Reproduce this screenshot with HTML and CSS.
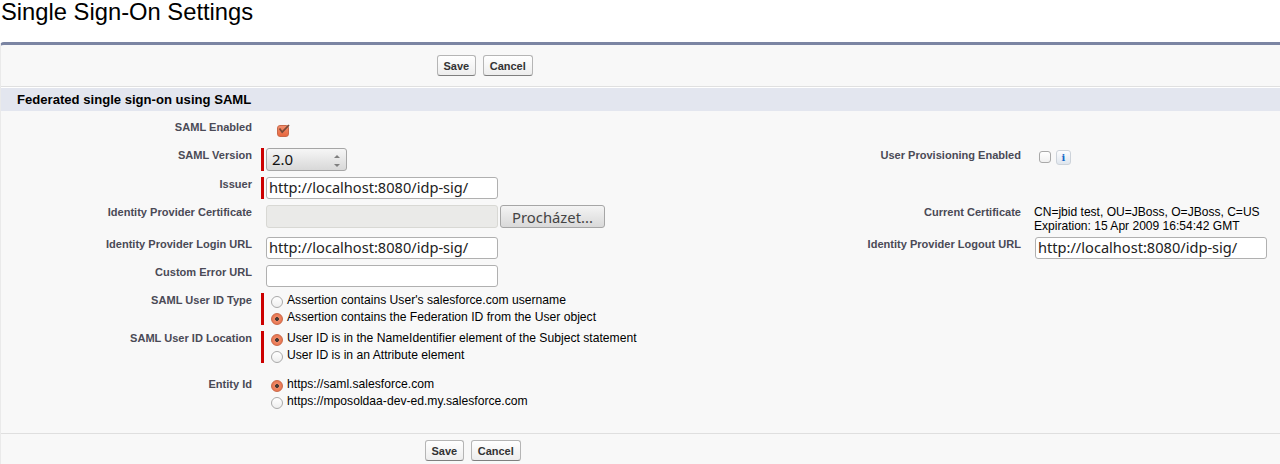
FILE: index.html
```html
<!DOCTYPE html>
<html lang="en">
<head>
<meta charset="utf-8">
<title>Single Sign-On Settings</title>
<link rel="stylesheet" href="styles.css">
</head>
<body>
<h1 class="title">Single Sign-On Settings</h1>
<div class="panel">
  <div class="btnbar top-bar">
    <button class="btn" type="button">Save</button>
    <button class="btn" type="button">Cancel</button>
  </div>
  <h2 class="section">Federated single sign-on using SAML</h2>
  <div class="form">
    <div class="row r-enabled">
      <div class="label label-first">SAML Enabled</div>
      <div class="data data-check"><input class="check check-on" type="checkbox" checked>
        <svg class="tick" width="13" height="12" viewBox="0 0 13 12"><path d="M2.5 4.5 L5.2 8.2 L12 1" fill="none" stroke="#7a4a38" stroke-width="1.8"/></svg>
      </div>
    </div>
    <div class="row r-version">
      <div class="label">SAML Version</div>
      <div class="data req">
        <div class="select">2.0<span class="spin"><i class="up"></i><i class="down"></i></span></div>
      </div>
      <div class="label label2">User Provisioning Enabled</div>
      <div class="data2 prov"><input class="check" type="checkbox"><span class="info">i</span></div>
    </div>
    <div class="row r-input">
      <div class="label">Issuer</div>
      <div class="data req"><input class="text" type="text" value="http://localhost:8080/idp-sig/"></div>
    </div>
    <div class="row r-cert">
      <div class="label">Identity Provider Certificate</div>
      <div class="data file"><span class="filebox"></span><button class="browse" type="button">Procházet...</button></div>
      <div class="label label2">Current Certificate</div>
      <div class="data2 certtext">CN=jbid test, OU=JBoss, O=JBoss, C=US<br>Expiration: 15 Apr 2009 16:54:42 GMT</div>
    </div>
    <div class="row r-login">
      <div class="label">Identity Provider Login URL</div>
      <div class="data"><input class="text" type="text" value="http://localhost:8080/idp-sig/"></div>
      <div class="label label2">Identity Provider Logout URL</div>
      <div class="data2"><input class="text" type="text" value="http://localhost:8080/idp-sig/"></div>
    </div>
    <div class="row r-input">
      <div class="label">Custom Error URL</div>
      <div class="data"><input class="text" type="text"></div>
    </div>
    <div class="row r-radio">
      <div class="label">SAML User ID Type</div>
      <div class="data req radios">
        <label class="opt"><input class="radio" type="radio" name="t">Assertion contains User's salesforce.com username</label>
        <label class="opt"><input class="radio" type="radio" name="t" checked>Assertion contains the Federation ID from the User object</label>
      </div>
    </div>
    <div class="row r-radio">
      <div class="label">SAML User ID Location</div>
      <div class="data req radios">
        <label class="opt"><input class="radio" type="radio" name="l" checked>User ID is in the NameIdentifier element of the Subject statement</label>
        <label class="opt"><input class="radio" type="radio" name="l">User ID is in an Attribute element</label>
      </div>
    </div>
    <div class="row r-entity">
      <div class="label">Entity Id</div>
      <div class="data radios">
        <label class="opt"><input class="radio" type="radio" name="e" checked>https://saml.salesforce.com</label>
        <label class="opt"><input class="radio" type="radio" name="e">https://mposoldaa-dev-ed.my.salesforce.com</label>
      </div>
    </div>
  </div>
  <div class="btnbar bottom-bar">
    <button class="btn" type="button">Save</button>
    <button class="btn" type="button">Cancel</button>
  </div>
</div>
</body>
</html>
```
FILE: styles.css
```css
* { box-sizing: border-box; }
html, body { margin: 0; padding: 0; background: #fff; }
body { width: 1280px; height: 464px; overflow: hidden; font-family: "Liberation Sans", Arial, sans-serif; font-size: 12px; color: #000; }
.title { margin: 0; padding: 0 0 0 1px; height: 42px; font-size: 23.75px; font-weight: 400; line-height: 24px; color: #000; }
.panel { border-top: 3px solid #7b85a3; border-left: 1px solid #eaeaea; border-top-left-radius: 4px; background: #f8f8f8; height: 422px; }
.btnbar { display: flex; gap: 7px; }
.top-bar { height: 43px; padding: 10px 0 0 436px; border-bottom: 1px solid #fff; box-shadow: inset 0 -1px 0 #e0e0e0; }
.bottom-bar { border-top: 1px solid #dfdfdf; padding: 6px 0 0 424px; }
.btn { height: 21px; padding: 0 6px; border: 1px solid #b5b5b5; border-bottom-color: #7f7f7f; border-radius: 3px; background: linear-gradient(#fff, #ededed); font: bold 11px "Liberation Sans", Arial, sans-serif; color: #333; }
.btn:first-child { padding: 0 5.5px; }
.section { margin: 0; height: 23px; padding: 0 0 0 16px; background: #e3e6ef; font-size: 13.1px; font-weight: 700; line-height: 23px; color: #000; }
.form { height: 322px; padding-top: 8px; }
.row { display: flex; }
.label { width: 251px; flex: none; text-align: right; font-size: 11.05px; font-weight: 700; line-height: 13px; color: #4a4a56; padding-top: 1px; }
.label-first { padding-top: 2px; }
.label2 { width: 381px; }
.data { width: 379px; flex: none; margin-left: 9px; padding-left: 2px; border-left: 3px solid transparent; }
.req { border-left-color: #c00; }
.data2 { margin-left: 14px; }
.r-enabled { height: 29px; }
.data-check { position: relative; padding-left: 13px; padding-top: 6px; }
.tick { position: absolute; left: 13px; top: 5px; }
.r-version { height: 23px; margin-bottom: 6px; }
.r-input { height: 22px; margin-bottom: 6px; }
.r-cert { height: 23px; margin-bottom: 9px; }
.r-login { height: 22px; margin-bottom: 6px; }
.r-radio { height: 32px; margin-bottom: 6px; }
.r-entity { height: 32px; margin-top: 14px; }
.check { appearance: none; margin: 0; display: block; width: 12px; height: 12px; border: 1px solid #a9a9a9; border-radius: 3px; background: linear-gradient(#fff, #f0f0f0); }
.check:checked { border-color: #c9694a; background: linear-gradient(#f28e6d, #e8683f); }
.select { position: relative; width: 81px; height: 23px; border: 1px solid #a6a6a6; border-radius: 3px; background: linear-gradient(#f6f6f6, #d8d8d8); font: 15px/21px "Noto Sans", "Open Sans", sans-serif; padding-left: 5px; color: #111; }
.spin { position: absolute; right: 6px; top: 6px; display: flex; flex-direction: column; gap: 6px; }
.spin i { display: block; width: 0; height: 0; border-left: 3px solid transparent; border-right: 3px solid transparent; }
.spin .up { border-bottom: 3px solid #7f7f7f; }
.spin .down { border-top: 3px solid #7f7f7f; }
.prov { display: flex; align-items: flex-start; gap: 5px; padding: 2px 0 0 4px; }
.prov .check { margin-top: 1px; }
.info { width: 15px; height: 15px; border: 1px solid #cdd3da; border-radius: 3px; background: linear-gradient(#fdfdfe, #dfe6ee); color: #1468c8; font: bold 10px/13px "DejaVu Serif", serif; text-align: center; }
.text { display: block; width: 232px; height: 22px; margin: 0; padding: 0 2px 2px; border: 1px solid #b0b0b0; border-radius: 3px; background: #fff; font: 14.6px "Noto Sans", "Open Sans", sans-serif; color: #222; outline: none; }
.file { display: flex; gap: 2px; }
.filebox { width: 232px; height: 23px; border: 1px solid #d8d8d4; border-radius: 3px; background: #eaeae8; }
.browse { width: 105px; height: 23px; padding: 0; border: 1px solid #a6a6a6; border-radius: 3px; background: linear-gradient(#f4f4f4, #d9d9d9); font: 14.8px "Noto Sans", "Open Sans", sans-serif; color: #444; }
.certtext { margin-left: 13px; line-height: 14px; font-size: 12.05px; color: #000; }
.radios { display: flex; flex-direction: column; gap: 3px; padding-left: 7px; }
.opt { display: flex; height: 14px; line-height: 14px; font-size: 12.15px; color: #000; }
.radio { appearance: none; flex: none; display: block; width: 12px; height: 12px; margin: 3px 4px 0 0; border: 1px solid #a9a9a9; border-radius: 50%; background: linear-gradient(#fff, #eee); }
.radio:checked { border-color: #c9694a; background: radial-gradient(circle, #4a3a34 0 1.6px, #ee8a68 2.2px, #e8683f 100%); }
```
